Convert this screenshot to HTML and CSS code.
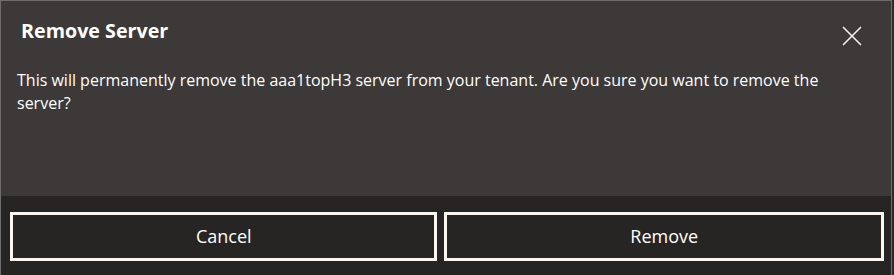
FILE: index.html
```html
<!DOCTYPE html>
<html lang="en">
<head>
  <meta charset="UTF-8" />
  <title>Remove Server</title>
  <link rel="stylesheet" href="styles.css">
</head>
<body>

  <div class="dialog">
    <div class="dialog-header">
      <h2>Remove Server</h2>
      <button class="close" title="Close">
        <svg width="20" height="20" viewBox="0 0 20 20">
          <path d="M1 1 L19 19 M19 1 L1 19" stroke="#f2f2f2" stroke-width="1.6" fill="none"/>
        </svg>
      </button>
    </div>

    <p class="dialog-body">
      This will permanently remove the aaa1topH3 server from your tenant. Are you sure you want to remove the server?
    </p>

    <div class="dialog-footer">
      <button class="btn">Cancel</button>
      <button class="btn">Remove</button>
    </div>
  </div>

</body>
</html>
```

FILE: styles.css
```css
body {
  margin: 0;
  padding: 0;
  background: #2a2a2a;
  font-family: 'Open Sans', sans-serif;
}

.dialog {
  width: 892px;
  height: 275px;
  box-sizing: border-box;
  background: #3c3938;
  border: 1px solid #6e6e6e;
  border-bottom: none;
  display: flex;
  flex-direction: column;
}

.dialog-header {
  display: flex;
  justify-content: space-between;
  align-items: flex-start;
  padding: 16px 29px 0 20px;
}

.dialog-header h2 {
  margin: 0;
  font-size: 19.7px;
  font-weight: bold;
  color: #ffffff;
  line-height: 28px;
}

.close {
  background: none;
  border: none;
  padding: 0;
  margin-top: 9px;
  cursor: pointer;
}

.dialog-body {
  margin: 0;
  padding: 20px 40px 0 16px;
  font-size: 16px;
  line-height: 23px;
  color: #ffffff;
  flex: 1;
}

.dialog-footer {
  background: #272524;
  display: flex;
  gap: 7px;
  padding: 16px 7px 14px 9px;
}

.btn {
  flex: auto;
  height: 49px;
  padding: 0 6px 2px;
  background: #272524;
  border: 3px solid #fdf5f0;
  color: #ffffff;
  font-family: 'Open Sans', sans-serif;
  font-size: 18px;
  cursor: pointer;
}
```
